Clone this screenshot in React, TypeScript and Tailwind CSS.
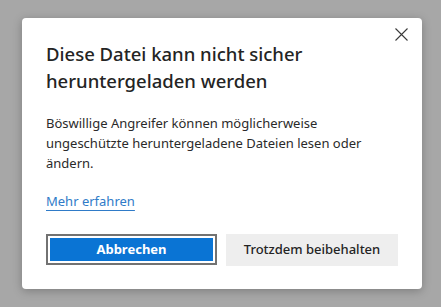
import React from "react";

export default function App() {
  return (
    <div className="w-[441px] h-[307px] bg-[#a7a7a7] pt-[18px] pl-[22px]" style={{ fontFamily: '"Noto Sans", "Open Sans", sans-serif' }}>
      <div className="relative w-[400px] h-[271px] bg-white rounded-[4px] shadow-[0_2px_10px_rgba(0,0,0,0.25)] pl-[24px] pr-[24px] pt-[22px]">
        <button className="absolute right-[14px] top-[10px] w-[13px] h-[13px]" aria-label="Schließen">
          <svg width="13" height="13" viewBox="0 0 13 13" className="block">
            <path d="M0.5 0.5 L12.5 12.5 M12.5 0.5 L0.5 12.5" stroke="#3a3a3a" strokeWidth="1.1" fill="none" />
          </svg>
        </button>
        <h1 className="text-[18.5px] leading-[27px] font-medium text-[#242424] w-[300px]">
          Diese Datei kann nicht sicher heruntergeladen werden
        </h1>
        <p className="mt-[19px] text-[13px] leading-[20px] text-[#2a2a2a] w-[330px]">
          Böswillige Angreifer können möglicherweise ungeschützte heruntergeladene Dateien lesen oder ändern.
        </p>
        <div className="mt-[18px] h-[20px] text-[13px] leading-[20px]">
          <a className="text-[#2f7bc8] underline underline-offset-[4px] decoration-[#2f7bc8]">Mehr erfahren</a>
        </div>
        <div className="mt-[23px] flex gap-[9px]">
          <button className="w-[171px] h-[31px] border-2 border-[#727272] p-[2px] bg-white">
            <div className="w-full h-full bg-[#0a74d4] text-white text-[13px] font-bold flex items-center justify-center">Abbrechen</div>
          </button>
          <button className="w-[172px] h-[32px] bg-[#eeeeee] text-[#242424] text-[13px] font-medium flex items-center justify-center">
            Trotzdem beibehalten
          </button>
        </div>
      </div>
    </div>
  );
}
